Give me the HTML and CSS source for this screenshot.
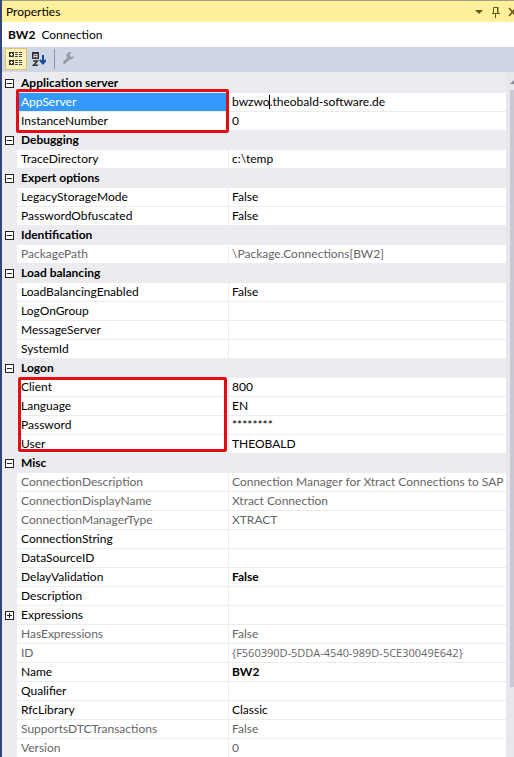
FILE: index.html
```html
<!DOCTYPE html>
<html lang="en">
<head>
<meta charset="utf-8">
<title>Properties</title>
<link rel="stylesheet" href="styles.css">
</head>
<body>
<main class="panel">
  <header class="titlebar">
    <h1>Properties</h1>
    <button class="tool" aria-label="Window position"><svg width="8" height="12" viewBox="0 0 8 12"><path d="M0 4h8L4 8z" fill="#6b5510"/></svg></button>
    <button class="tool" aria-label="Auto hide"><svg width="8" height="12" viewBox="0 0 8 12"><path d="M1.500 7V1.500h4V7M0 7.500h8M3.500 8v4" fill="none" stroke="#6b5510"/><path d="M5 1h1.500v6H5z" fill="#6b5510"/></svg></button>
    <button class="tool" aria-label="Close"><svg width="9" height="12" viewBox="0 0 9 12"><path d="M1 2l7 8M8 2l-7 8" fill="none" stroke="#6b5510" stroke-width="1.700"/></svg></button>
  </header>
  <div class="object"><strong>BW2</strong><span>Connection</span></div>
  <div class="toolbar">
    <button class="mode active" aria-label="Categorized"><svg width="16" height="16" viewBox="0 0 16 16"><path d="M1 1h5v5H1zM1 9h5v5H1z" fill="#333"/><path d="M2 3.500h3M3.500 2v3M2 11.500h3M3.500 10v3" stroke="#fff3bd"/><path d="M7 1.500h3m1 0h3M7 3.500h3m1 0h3M7 5.500h3m1 0h3M7 9.500h3m1 0h3M7 11.500h3m1 0h3M7 13.500h3m1 0h3" stroke="#444"/></svg></button>
    <button class="mode" aria-label="Alphabetical"><svg width="16" height="16" viewBox="0 0 16 16"><path d="M2 1h7v7H2z" fill="#333"/><path d="M4 7V3.500h3V7M4 5.500h3" fill="none" stroke="#d5dbe8"/><path d="M3 10h4.500l-4 4.300H8" fill="none" stroke="#333" stroke-width="1.500"/><path d="M13 4v8M10 9l3 3.500L16 9" fill="none" stroke="#114a9c" stroke-width="2"/></svg></button>
    <span class="separator"></span>
    <button class="mode" aria-label="Property pages" disabled><svg width="16" height="16" viewBox="0 0 16 16"><path d="M3.500 11.500L8 7" stroke="#9a9ca4" stroke-width="3" stroke-linecap="round"/><path d="M10.500 1.200A3.800 3.800 0 1 0 13 5l-2.300 1.200L8.500 4z" fill="#9a9ca4"/></svg></button>
  </div>
  <div class="grid">
    <div class="rows">
    <table>
      <colgroup><col class="gutter"><col class="names"><col></colgroup>
      <tbody>
        <tr class="category"><td><button class="toggle" aria-label="Collapse Application server"></button></td><th colspan="2">Application server</th></tr>
        <tr class="selected"><td></td><th><label for="appserver">AppServer</label><span class="mark mark-server"></span></th><td class="edit"><input id="appserver" type="text" value="bwzwo.theobald-software.de"><span class="caret"></span></td></tr>
        <tr><td></td><th>InstanceNumber</th><td>0</td></tr>
      </tbody>
      <tbody>
        <tr class="category"><td><button class="toggle" aria-label="Collapse Debugging"></button></td><th colspan="2">Debugging</th></tr>
        <tr><td></td><th>TraceDirectory</th><td>c:\temp</td></tr>
      </tbody>
      <tbody>
        <tr class="category"><td><button class="toggle" aria-label="Collapse Expert options"></button></td><th colspan="2">Expert options</th></tr>
        <tr><td></td><th>LegacyStorageMode</th><td>False</td></tr>
        <tr><td></td><th>PasswordObfuscated</th><td>False</td></tr>
      </tbody>
      <tbody>
        <tr class="category"><td><button class="toggle" aria-label="Collapse Identification"></button></td><th colspan="2">Identification</th></tr>
        <tr class="readonly"><td></td><th>PackagePath</th><td>\Package.Connections[BW2]</td></tr>
      </tbody>
      <tbody>
        <tr class="category"><td><button class="toggle" aria-label="Collapse Load balancing"></button></td><th colspan="2">Load balancing</th></tr>
        <tr><td></td><th>LoadBalancingEnabled</th><td>False</td></tr>
        <tr><td></td><th>LogOnGroup</th><td></td></tr>
        <tr><td></td><th>MessageServer</th><td></td></tr>
        <tr><td></td><th>SystemId</th><td></td></tr>
      </tbody>
      <tbody>
        <tr class="category"><td><button class="toggle" aria-label="Collapse Logon"></button></td><th colspan="2">Logon</th></tr>
        <tr><td></td><th>Client<span class="mark mark-logon"></span></th><td>800</td></tr>
        <tr><td></td><th>Language</th><td>EN</td></tr>
        <tr><td></td><th>Password</th><td>********</td></tr>
        <tr><td></td><th>User</th><td>THEOBALD</td></tr>
      </tbody>
      <tbody>
        <tr class="category"><td><button class="toggle" aria-label="Collapse Misc"></button></td><th colspan="2">Misc</th></tr>
        <tr class="readonly"><td></td><th>ConnectionDescription</th><td>Connection Manager for Xtract Connections to SAP</td></tr>
        <tr class="readonly"><td></td><th>ConnectionDisplayName</th><td>Xtract Connection</td></tr>
        <tr class="readonly"><td></td><th>ConnectionManagerType</th><td>XTRACT</td></tr>
        <tr><td></td><th>ConnectionString</th><td></td></tr>
        <tr><td></td><th>DataSourceID</th><td></td></tr>
        <tr><td></td><th>DelayValidation</th><td><strong>False</strong></td></tr>
        <tr><td></td><th>Description</th><td></td></tr>
        <tr><td><button class="toggle closed" aria-label="Expand Expressions"></button></td><th>Expressions</th><td></td></tr>
        <tr class="readonly"><td></td><th>HasExpressions</th><td>False</td></tr>
        <tr class="readonly"><td></td><th>ID</th><td class="guid">{F560390D-5DDA-4540-989D-5CE30049E642}</td></tr>
        <tr><td></td><th>Name</th><td><strong>BW2</strong></td></tr>
        <tr><td></td><th>Qualifier</th><td></td></tr>
        <tr><td></td><th>RfcLibrary</th><td>Classic</td></tr>
        <tr class="readonly"><td></td><th>SupportsDTCTransactions</th><td>False</td></tr>
        <tr class="readonly"><td></td><th>Version</th><td>0</td></tr>
      </tbody>
    </table>
    </div>
    <div class="scrollbar">
      <svg width="10" height="5" viewBox="0 0 10 5"><path d="M0 5L5 0l5 5z" fill="#868999"/></svg>
      <div class="thumb"></div>
    </div>
  </div>
</main>
</body>
</html>
```
FILE: styles.css
```css
* { box-sizing: border-box; }
body {
  margin: 0;
  font: 12px/18px Lato, "Open Sans", sans-serif;
  color: #000;
}
button { padding: 0; border: 0; background: none; }
svg { display: block; flex: none; }
.panel {
  display: flex;
  flex-direction: column;
  height: 100vh;
  overflow: hidden;
  border-left: 2px solid #35457a;
  background: #ececf0;
}
.titlebar {
  display: flex;
  flex: none;
  align-items: center;
  gap: 8px;
  height: 22px;
  padding-left: 4px;
  border-top: 1px solid #a39f87;
  background: #fff09c;
  overflow: hidden;
}
.titlebar h1 { flex: 1; margin: 0; font-size: 12px; font-weight: 400; }
.tool { flex: none; }
.tool:first-of-type { margin-right: 1px; }
.tool:last-child { width: 6px; overflow: hidden; }
.object {
  display: flex;
  flex: none;
  gap: 6px;
  align-items: center;
  height: 25px;
  padding-left: 6px;
  background: #fff;
}
.toolbar {
  display: flex;
  flex: none;
  align-items: flex-start;
  height: 25px;
  padding: 1px 0 0 3px;
  background: #cfd6e5;
}
.mode {
  display: flex;
  align-items: center;
  justify-content: center;
  width: 22px;
  height: 22px;
}
.mode.active { border: 1px solid #e5c365; background: #fff3bd; }
.separator { width: 1px; height: 20px; margin: 1px 3px 0 5px; background: #8593b0; }
.grid { display: flex; flex: 1; min-height: 0; }
.rows { flex: 1; min-width: 0; padding-top: 2px; }
table {
  width: 100%;
  table-layout: fixed;
  border-collapse: separate;
  border-spacing: 0;
}
.gutter { width: 15px; }
.names { width: 212px; }
tr { height: 19px; background: #fff; }
td, th {
  height: 19px;
  padding: 0 0 0 4px;
  border-bottom: 1px solid #ececf0;
  font-weight: 400;
  text-align: left;
  white-space: nowrap;
}
th { position: relative; border-right: 1px solid #ececf0; }
td:first-child { padding: 0 0 0 3px; background: #ececf0; }
td:last-child { padding-left: 3px; }
.category { background: #ececf0; }
.category th { font-weight: 700; }
.readonly { color: #666; }
.guid { font-family: "Open Sans", sans-serif; font-size: 11px; }
.selected th { background: #3399ff; color: #fff; }
strong { font-weight: 700; }
.toggle {
  display: block;
  width: 9px;
  height: 9px;
  border: 1px solid #222;
  background: linear-gradient(#222, #222) center / 5px 1px no-repeat #fff;
}
.toggle.closed {
  background:
    linear-gradient(#222, #222) center / 5px 1px no-repeat,
    linear-gradient(#222, #222) center / 1px 5px no-repeat #fff;
}
.edit { position: relative; }
.edit input {
  display: block;
  width: 100%;
  height: 18px;
  padding: 0;
  border: 0;
  outline: 0;
  background: none;
  font: inherit;
  color: inherit;
}
.caret { position: absolute; top: 2px; left: 40px; width: 1px; height: 14px; background: #000; }
.mark { position: absolute; z-index: 1; border: 3px solid #e30d13; border-radius: 2px; pointer-events: none; }
.mark-server { top: -4px; left: -1px; width: 213px; height: 44px; }
.mark-logon { top: -1px; left: 1px; width: 209px; height: 75px; }
.scrollbar { flex: none; width: 8px; padding: 7px 0 0 4px; overflow: hidden; background: #e7e7ec; }
.thumb { height: 88%; margin-top: 6px; background: #c9cad3; }
```
